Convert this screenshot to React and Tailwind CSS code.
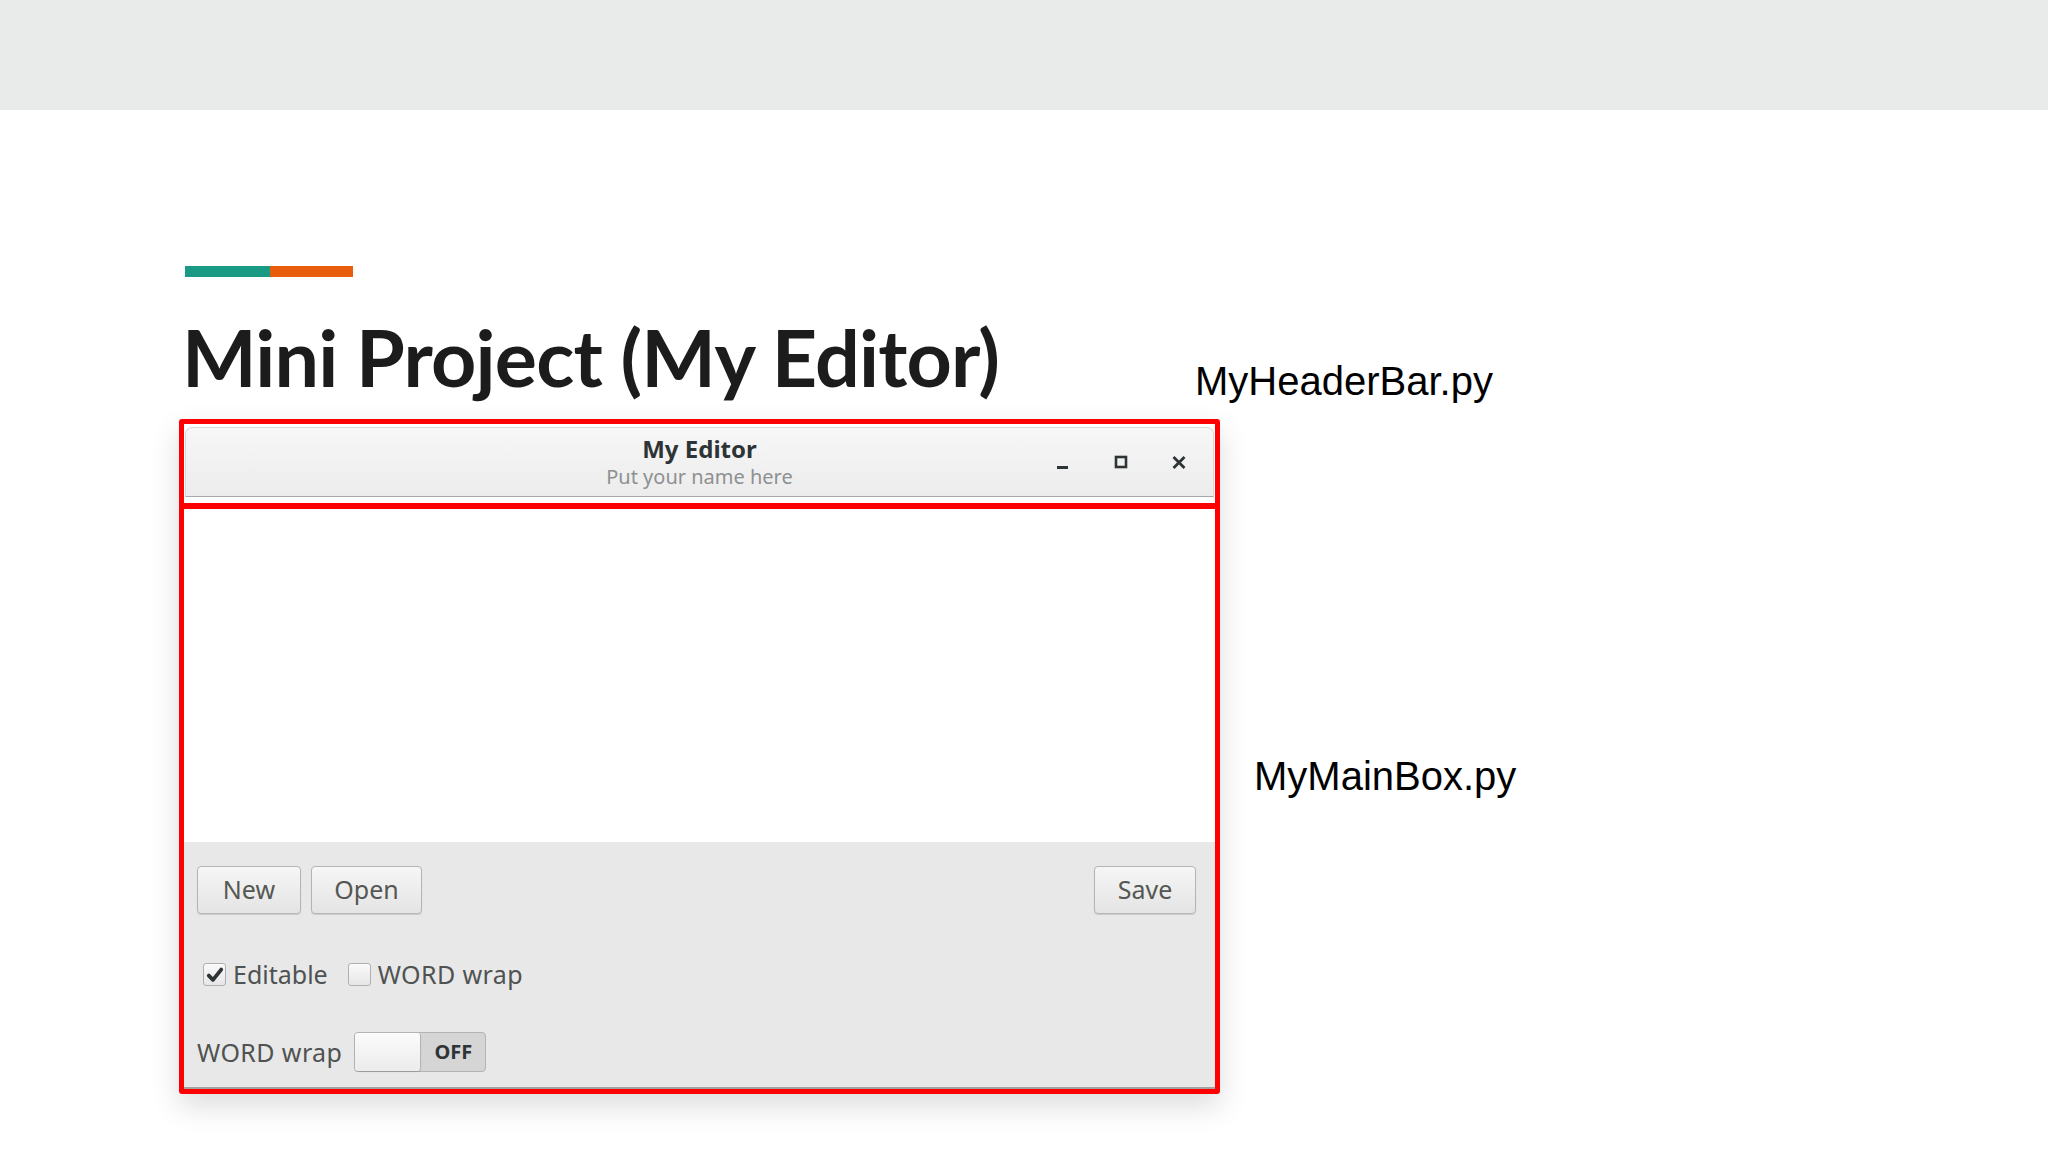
import React from "react";

function GtkButton({ children, className = "" }) {
  return (
    <button
      className={`h-[48px] rounded-[4px] border border-[#b4b4b4] bg-gradient-to-b from-[#f6f6f6] to-[#e4e4e4] text-[25px] text-[#555753] shadow-[0_1px_1px_rgba(0,0,0,0.12)] ${className}`}
    >
      {children}
    </button>
  );
}

function CheckBox({ checked }) {
  return (
    <span className="w-[23px] h-[23px] rounded-[3px] border border-[#b0b0b0] bg-gradient-to-b from-[#fafafa] to-[#e6e6e6] flex items-center justify-center">
      {checked && (
        <svg width="18" height="18" viewBox="0 0 16 16">
          <path d="M2.5 8.5 L6.2 12.3 L13.5 3.2" fill="none" stroke="#2e3436" strokeWidth="3.4" strokeLinecap="round" strokeLinejoin="round" />
        </svg>
      )}
    </span>
  );
}

export default function App() {
  return (
    <div className="w-[2048px] h-[1152px] bg-white flex flex-col overflow-hidden font-['Liberation_Sans',Arial,sans-serif]">
      {/* top band */}
      <div className="h-[110px] bg-[#e8ebea] shrink-0" />

      <div className="flex flex-col pl-[179px]">
        {/* accent bar */}
        <div className="mt-[156px] ml-[6px] flex h-[11px]">
          <div className="w-[85px] bg-[#1a9a85]" />
          <div className="w-[83px] bg-[#e85d0c]" />
        </div>

        {/* title row */}
        <div className="mt-[40px] flex">
          <div className="w-[1016px]">
            <h1 className="ml-[3px] text-[79px] leading-none font-bold text-[#1c1c1c] tracking-[-0.8px] font-['Lato',sans-serif]">
              Mini Project (My Editor)
            </h1>
          </div>
          <div className="mt-[44px] text-[40px] leading-none text-black">MyHeaderBar.py</div>
        </div>

        {/* window row */}
        <div className="mt-[18px] flex">
          <div className="w-[1041px] h-[675px] border-[5px] border-[#ff0000] rounded-[3px] shadow-[0_12px_30px_rgba(0,0,0,0.14)] flex flex-col bg-white font-['Noto_Sans',sans-serif]">
            {/* header bar */}
            <div className="h-[73px] shrink-0 pt-[3px] px-[1px] bg-white">
              <div className="relative h-full rounded-t-[7px] border border-b-[#a8a8a8] border-[#d8d8d8] bg-gradient-to-b from-[#f7f7f7] to-[#ececec] flex flex-col items-center justify-center">
                <div className="text-[24px] leading-[30px] font-bold text-[#2e3436]">My Editor</div>
                <div className="text-[20px] leading-[26px] text-[#8d9091]">Put your name here</div>
                <div className="absolute right-[22px] top-[27px] flex items-center gap-[34px]">
                  <svg width="24" height="16" viewBox="0 0 24 16">
                    <rect x="6" y="11" width="11" height="3" fill="#2e3436" />
                  </svg>
                  <svg width="24" height="16" viewBox="0 0 24 16">
                    <rect x="7" y="2" width="10" height="10" fill="none" stroke="#2e3436" strokeWidth="2.6" />
                  </svg>
                  <svg width="24" height="16" viewBox="0 0 24 16">
                    <path d="M6.5 2 L17.5 13 M17.5 2 L6.5 13" stroke="#2e3436" strokeWidth="2.8" />
                  </svg>
                </div>
              </div>
            </div>
            <div className="h-[6px] shrink-0 bg-white" />
            <div className="h-[6px] shrink-0 bg-[#ff0000]" />

            {/* text view */}
            <div className="h-[333px] shrink-0 bg-white" />

            {/* controls */}
            <div className="flex-1 bg-[#e8e8e8] border-b-2 border-[#a3a3a3] flex flex-col pl-[13px] pr-[19px] pt-[24px]">
              <div className="flex items-center gap-[10px]">
                <GtkButton className="w-[104px]">New</GtkButton>
                <GtkButton className="w-[111px]">Open</GtkButton>
                <GtkButton className="w-[102px] ml-auto">Save</GtkButton>
              </div>

              <div className="mt-[48px] flex items-center pl-[6px] text-[25px] leading-none text-[#4f5252]">
                <CheckBox checked />
                <span className="ml-[7px]">Editable</span>
                <span className="ml-[20px]"><CheckBox /></span>
                <span className="ml-[7px] tracking-[0.4px]">WORD wrap</span>
              </div>

              <div className="mt-[45px] flex items-center text-[25px] leading-none text-[#4f5252]">
                <span className="tracking-[0.4px]">WORD wrap</span>
                <div className="ml-[12px] w-[132px] h-[40px] rounded-[4px] border border-[#b4b4b4] bg-[#d5d5d5] flex">
                  <div className="w-[66px] h-full rounded-[3px] border-r border-[#b4b4b4] bg-gradient-to-b from-[#fbfbfb] to-[#ececec] shadow-[0_1px_1px_rgba(0,0,0,0.15)]" />
                  <div className="flex-1 flex items-center justify-center text-[20px] font-bold text-[#2e3436]">OFF</div>
                </div>
              </div>
            </div>
          </div>

          <div className="ml-[34px] mt-[337px] text-[40px] leading-none text-black">MyMainBox.py</div>
        </div>
      </div>
    </div>
  );
}
